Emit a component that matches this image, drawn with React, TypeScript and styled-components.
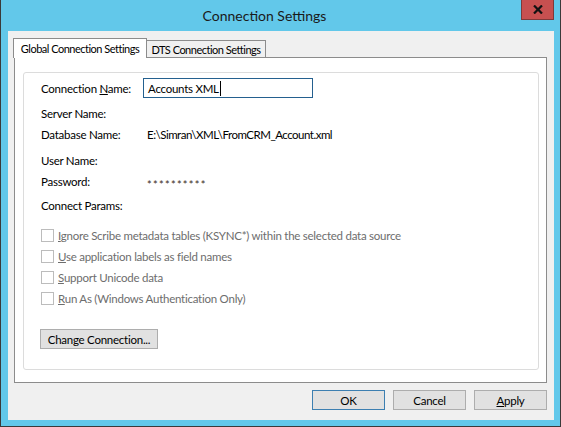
import { styled, createGlobalStyle } from 'styled-components';

const GlobalStyle = createGlobalStyle`
    html, body {
        margin: 0;
        padding: 0;
        background: #62c8ea;
    }
    body {
        font-family: Lato, "Liberation Sans", sans-serif;
        font-size: 11.5px;
        letter-spacing: -0.25px;
        color: #000;
    }
`;

const Window = styled.div`
    width: 561px;
    height: 427px;
    box-sizing: border-box;
    background: #62c8ea;
    border: 1px solid #3a3a3a;
    border-top: none;
    padding: 0 6px 6px 7px;
    display: flex;
    flex-direction: column;
`;

const TitleBar = styled.div`
    height: 31px;
    display: flex;
    align-items: flex-start;
`;

const Title = styled.div`
    flex: 1;
    text-align: center;
    font-size: 14px;
    letter-spacing: 0;
    line-height: 32px;
    color: #1a1a1a;
`;

const CloseButton = styled.div`
    width: 33px;
    height: 20px;
    box-sizing: border-box;
    background: #c75050;
    border: 1px solid #7e3a3a;
    border-top: none;
    display: flex;
    align-items: center;
    justify-content: center;
`;

const Client = styled.div`
    flex: 1;
    background: #f0f0f0;
    padding: 7px 7px 9px 5px;
    display: flex;
    flex-direction: column;
`;

const TabStrip = styled.div`
    display: flex;
    align-items: flex-end;
    height: 19px;
    position: relative;
    z-index: 1;
`;

const Tab = styled.div<{ $active?: boolean; $width: number }>`
    box-sizing: border-box;
    width: ${p => p.$width}px;
    border: 1px solid #8c8c8c;
    border-bottom: none;
    background: ${p => (p.$active ? '#fff' : '#f0f0f0')};
    height: ${p => (p.$active ? '20px' : '17px')};
    margin-bottom: ${p => (p.$active ? '-1px' : '0')};
    padding-top: ${p => (p.$active ? '2px' : '1px')};
    margin-left: ${p => (p.$active ? '0' : '-1px')};
    font-size: 11px;
    letter-spacing: -0.5px;
    text-align: center;
    white-space: nowrap;
    line-height: 15px;
`;

const TabPanel = styled.div`
    margin-left: 1px;
    width: 533px;
    height: 326px;
    box-sizing: border-box;
    border: 1px solid #8c8c8c;
    background: #fff;
    padding: 14px 7px 12px 8px;
    display: flex;
`;

const GroupBox = styled.div`
    flex: 1;
    border: 1px solid #dcdcdc;
    border-radius: 3px;
    padding: 5px 0 0 17px;
    display: flex;
    flex-direction: column;
`;

const FieldRow = styled.div<{ $gap: number }>`
    display: flex;
    align-items: center;
    height: 20px;
    margin-top: ${p => p.$gap}px;
`;

const Label = styled.div`
    width: 102px;
    white-space: nowrap;
`;

const Value = styled.div`
    padding-left: 4px;
    letter-spacing: -0.5px;
    white-space: nowrap;
`;

const Secret = styled.div`
    padding-left: 4px;
    padding-top: 6px;
    font-size: 11px;
    letter-spacing: 1.3px;
    color: #3a2a1a;
`;

const TextBox = styled.div`
    width: 170px;
    height: 20px;
    box-sizing: border-box;
    border: 1px solid #24608f;
    padding-left: 4px;
    display: flex;
    align-items: center;
    white-space: nowrap;
`;

const Caret = styled.span`
    display: inline-block;
    width: 1px;
    height: 15px;
    background: #000;
    margin-left: 1px;
`;

const CheckList = styled.div`
    margin-top: 10px;
    display: flex;
    flex-direction: column;
`;

const CheckRow = styled.div`
    display: flex;
    align-items: center;
    height: 21px;
    color: #6d6d6d;
    white-space: nowrap;
`;

const CheckBox = styled.span`
    width: 13px;
    height: 13px;
    box-sizing: border-box;
    border: 1px solid #bcbcbc;
    background: #fff;
    margin-right: 4px;
    flex: none;
`;

const Button = styled.button<{ $default?: boolean; $width?: number }>`
    font: inherit;
    letter-spacing: inherit;
    color: #000;
    height: 20px;
    width: ${p => p.$width ?? 73}px;
    box-sizing: border-box;
    background: #e1e1e1;
    border: 1px solid ${p => (p.$default ? '#3c7fb1' : '#adadad')};
    border-radius: 0;
    padding: 0;
    display: flex;
    align-items: center;
    justify-content: center;
    white-space: nowrap;
`;

const ChangeButton = styled(Button)`
    margin-top: 20px;
    margin-left: -1px;
`;

const ButtonBar = styled.div`
    margin-top: 7px;
    display: flex;
    justify-content: flex-end;
    gap: 8px;
`;

const fields = [
    { label: 'Server Name:', gap: 5 },
    { label: 'Database Name:', gap: 1, value: 'E:\\Simran\\XML\\FromCRM_Account.xml' },
    { label: 'User Name:', gap: 6 },
];

const options: [string, string][] = [
    ['I', 'gnore Scribe metadata tables (KSYNC*) within the selected data source'],
    ['U', 'se application labels as field names'],
    ['S', 'upport Unicode data'],
    ['R', 'un As (Windows Authentication Only)'],
];

export default function App() {
    return (
        <>
            <GlobalStyle />
            <Window>
                <TitleBar>
                    <Title>Connection Settings</Title>
                    <CloseButton>
                        <svg width="10" height="9" viewBox="0 0 10 9">
                            <path d="M1 0.5 L9 8.5 M9 0.5 L1 8.5" stroke="#111" strokeWidth="2.2" />
                        </svg>
                    </CloseButton>
                </TitleBar>
                <Client>
                    <TabStrip>
                        <Tab $active $width={134}>
                            Global Connection Settings
                        </Tab>
                        <Tab $width={120}>DTS Connection Settings</Tab>
                    </TabStrip>
                    <TabPanel>
                        <GroupBox>
                            <FieldRow $gap={0}>
                                <Label>
                                    Connection <u>N</u>ame:
                                </Label>
                                <TextBox>
                                    Accounts XML
                                    <Caret />
                                </TextBox>
                            </FieldRow>
                            {fields.map(f => (
                                <FieldRow key={f.label} $gap={f.gap}>
                                    <Label>{f.label}</Label>
                                    {f.value && <Value>{f.value}</Value>}
                                </FieldRow>
                            ))}
                            <FieldRow $gap={1}>
                                <Label>Password:</Label>
                                <Secret>**********</Secret>
                            </FieldRow>
                            <FieldRow $gap={4}>
                                <Label>Connect Params:</Label>
                            </FieldRow>
                            <CheckList>
                                {options.map(([key, rest]) => (
                                    <CheckRow key={key}>
                                        <CheckBox />
                                        <span>
                                            <u>{key}</u>
                                            {rest}
                                        </span>
                                    </CheckRow>
                                ))}
                            </CheckList>
                            <ChangeButton $width={118}>Change Connection...</ChangeButton>
                        </GroupBox>
                    </TabPanel>
                    <ButtonBar>
                        <Button $default>OK</Button>
                        <Button>Cancel</Button>
                        <Button>
                            <span>
                                <u>A</u>pply
                            </span>
                        </Button>
                    </ButtonBar>
                </Client>
            </Window>
        </>
    );
}
